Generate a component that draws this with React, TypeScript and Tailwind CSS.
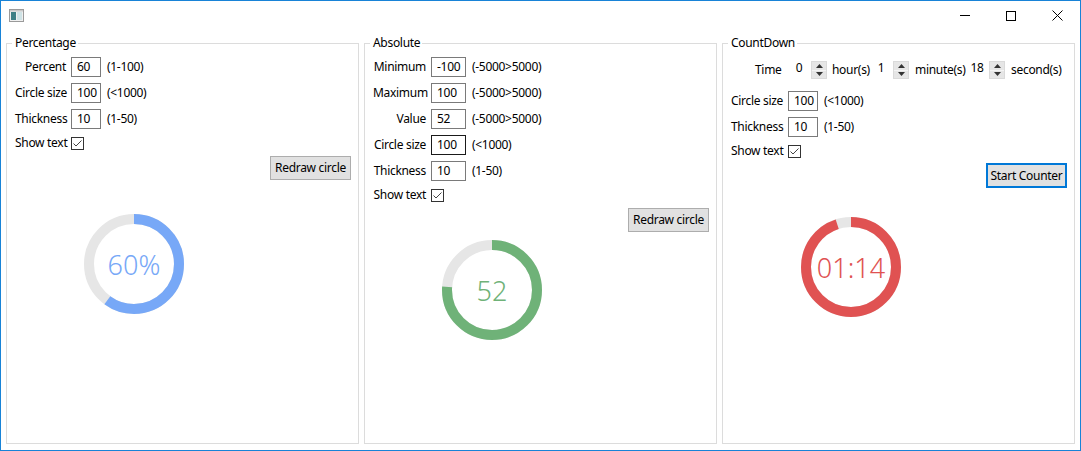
import React from "react";

const FONT = { fontFamily: '"Noto Sans", "Open Sans", sans-serif' };

function Field({
  label,
  value,
  hint,
  labelW,
  boxW,
  gap,
  dark,
  className,
}: {
  label: string;
  value: string;
  hint: string;
  labelW: string;
  boxW: string;
  gap: string;
  dark?: boolean;
  className?: string;
}) {
  return (
    <div className={`flex items-center h-[20px] ${className ?? ""}`}>
      <div className={`${labelW} text-right whitespace-nowrap`}>{label}</div>
      <div
        className={`${gap} ${boxW} h-[20px] border ${
          dark ? "border-[#1a1a1a]" : "border-[#7a7a7a]"
        } pl-[5px] flex items-center leading-none`}
      >
        {value}
      </div>
      <div className="ml-[6px] whitespace-nowrap">{hint}</div>
    </div>
  );
}

function ShowText({ labelW, gap, className }: { labelW: string; gap: string; className?: string }) {
  return (
    <div className={`flex items-center h-[16px] ${className ?? ""}`}>
      <div className={`${labelW} text-right whitespace-nowrap`}>Show text</div>
      <div className={`${gap} w-[13px] h-[13px] border border-[#333333] bg-white flex items-center justify-center`}>
        <svg width="11" height="11" viewBox="0 0 11 11">
          <polyline points="1.5,5.5 4,8 9.5,2.5" fill="none" stroke="#444" strokeWidth="1" />
        </svg>
      </div>
    </div>
  );
}

function Ring({ pct, color, text, className }: { pct: number; color: string; text: string; className?: string }) {
  const c = 2 * Math.PI * 45;
  return (
    <div className={`relative w-[100px] h-[100px] ${className ?? ""}`}>
      <svg width="100" height="100" viewBox="0 0 100 100">
        <circle cx="50" cy="50" r="45" fill="none" stroke="#e6e6e6" strokeWidth="10" />
        <circle
          cx="50"
          cy="50"
          r="45"
          fill="none"
          stroke={color}
          strokeWidth="10"
          strokeDasharray={`${pct * c} ${c}`}
          transform="rotate(-90 50 50)"
        />
      </svg>
      <div
        className="absolute inset-0 flex items-center justify-center text-[27px] leading-none tracking-normal font-light"
        style={{ color }}
      >
        {text}
      </div>
    </div>
  );
}

function Spinner() {
  return (
    <div className="w-[16px] h-[18px] flex flex-col bg-[#e6e6e6] border border-[#dadada]">
      <div className="flex-1 flex items-center justify-center border-b border-[#f4f4f4]">
        <svg width="7" height="4" viewBox="0 0 7 4">
          <polygon points="0,4 7,4 3.5,0" fill="#333" />
        </svg>
      </div>
      <div className="flex-1 flex items-center justify-center">
        <svg width="7" height="4" viewBox="0 0 7 4">
          <polygon points="0,0 7,0 3.5,4" fill="#333" />
        </svg>
      </div>
    </div>
  );
}

function Panel({ title, children }: { title: string; children: React.ReactNode }) {
  return (
    <fieldset className="border border-[#dcdcdc] min-w-0 h-[409px] flex flex-col">
      <legend className="ml-[5px] pl-[3px] pr-[2px] h-[16px] leading-[16px]">{title}</legend>
      <div className="flex flex-col pl-[8px] pr-[7px] pt-[6px]">{children}</div>
    </fieldset>
  );
}

function Button({ label, focused }: { label: string; focused?: boolean }) {
  return (
    <div className="flex justify-end">
      <div
        className={`w-[81px] bg-[#e1e1e1] flex items-center justify-center whitespace-nowrap ${
          focused ? "border-2 border-[#0078d7] h-[25px]" : "border border-[#adadad] h-[24px]"
        }`}
      >
        {label}
      </div>
    </div>
  );
}

export default function App() {
  return (
    <div
      className="w-[1081px] h-[451px] border border-[#1883d7] bg-white text-[12px] tracking-[-0.3px] text-black flex flex-col overflow-hidden"
      style={FONT}
    >
      <div className="h-[29px] flex items-center">
        <div className="ml-[8px] mt-[-1px]">
          <svg width="15" height="13" viewBox="0 0 15 13">
            <rect x="0.5" y="0.5" width="14" height="12" fill="#f0f0f0" stroke="#9a9a9a" />
            <rect x="2" y="3" width="5" height="8" fill="#3d7f85" />
            <rect x="8" y="3" width="5" height="8" fill="#cfe3e6" />
            <rect x="1" y="1" width="13" height="1.5" fill="#c8c8c8" />
          </svg>
        </div>
        <div className="flex-1" />
        <div className="w-[46px] h-[29px] flex items-center justify-center">
          <div className="w-[10px] h-[1px] bg-black" />
        </div>
        <div className="w-[46px] h-[29px] flex items-center justify-center">
          <div className="w-[10px] h-[10px] border border-black" />
        </div>
        <div className="w-[46px] h-[29px] flex items-center justify-center">
          <svg width="11" height="11" viewBox="0 0 11 11">
            <path d="M0.5 0.5 L10.5 10.5 M10.5 0.5 L0.5 10.5" stroke="#000" strokeWidth="1" />
          </svg>
        </div>
      </div>

      <div className="grid grid-cols-[353px_353px_353px] gap-[5px] px-[5px] pt-[5px]">
        <Panel title="Percentage">
          <Field label="Percent" value="60" hint="(1-100)" labelW="w-[51px]" boxW="w-[30px]" gap="ml-[5px]" />
          <Field className="mt-[6px]" label="Circle size" value="100" hint="(<1000)" labelW="w-[51px]" boxW="w-[30px]" gap="ml-[5px]" />
          <Field className="mt-[6px]" label="Thickness" value="10" hint="(1-50)" labelW="w-[51px]" boxW="w-[30px]" gap="ml-[5px]" />
          <ShowText className="mt-[6px]" labelW="w-[51px]" gap="ml-[5px]" />
          <div className="mt-[5px]">
            <Button label="Redraw circle" />
          </div>
          <Ring className="mt-[34px] ml-[69px]" pct={0.6} color="#77a8f7" text="60%" />
        </Panel>

        <Panel title="Absolute">
          <Field label="Minimum" value="-100" hint="(-5000>5000)" labelW="w-[53px]" boxW="w-[35px]" gap="ml-[5px]" />
          <Field className="mt-[6px]" label="Maximum" value="100" hint="(-5000>5000)" labelW="w-[53px]" boxW="w-[35px]" gap="ml-[5px]" />
          <Field className="mt-[6px]" label="Value" value="52" hint="(-5000>5000)" labelW="w-[53px]" boxW="w-[35px]" gap="ml-[5px]" />
          <Field className="mt-[6px]" label="Circle size" value="100" hint="(<1000)" labelW="w-[53px]" boxW="w-[35px]" gap="ml-[5px]" dark />
          <Field className="mt-[6px]" label="Thickness" value="10" hint="(1-50)" labelW="w-[53px]" boxW="w-[35px]" gap="ml-[5px]" />
          <ShowText className="mt-[6px]" labelW="w-[53px]" gap="ml-[5px]" />
          <div className="mt-[5px]">
            <Button label="Redraw circle" />
          </div>
          <Ring className="mt-[8px] ml-[69px]" pct={0.76} color="#6fb278" text="52" />
        </Panel>

        <Panel title="CountDown">
          <div className="flex items-center h-[24px] mt-[1px] whitespace-nowrap">
            <div className="ml-[24px] w-[32px]">Time</div>
            <div className="w-[24px] text-center pb-[4px]">0</div>
            <Spinner />
            <div className="ml-[5px] w-[37px]">hour(s)</div>
            <div className="w-[24px] text-center pb-[4px]">1</div>
            <Spinner />
            <div className="ml-[6px] w-[50px]">minute(s)</div>
            <div className="w-[24px] text-center pb-[4px]">18</div>
            <Spinner />
            <div className="ml-[6px]">second(s)</div>
          </div>
          <Field className="mt-[9px]" label="Circle size" value="100" hint="(<1000)" labelW="w-[51px]" boxW="w-[30px]" gap="ml-[6px]" />
          <Field className="mt-[6px]" label="Thickness" value="10" hint="(1-50)" labelW="w-[51px]" boxW="w-[30px]" gap="ml-[6px]" />
          <ShowText className="mt-[6px]" labelW="w-[51px]" gap="ml-[6px]" />
          <div className="mt-[4px]">
            <Button label="Start Counter" focused />
          </div>
          <Ring className="mt-[29px] ml-[70px]" pct={74 / 78} color="#e05252" text="01:14" />
        </Panel>
      </div>
    </div>
  );
}
